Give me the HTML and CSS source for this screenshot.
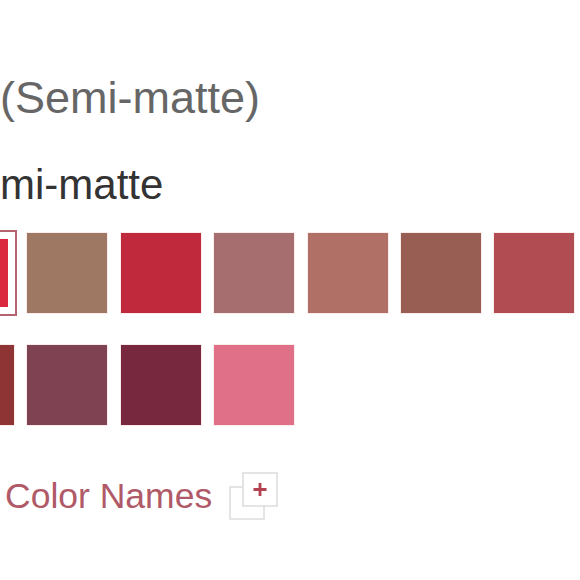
FILE: index.html
```html
<!DOCTYPE html>
<html lang="en">
<head>
<meta charset="utf-8">
<title>Shades</title>
<link rel="stylesheet" href="styles.css">
</head>
<body>
<main class="page">
  <h1 class="title">(Semi-matte)</h1>
  <h2 class="subtitle">mi-matte</h2>
  <div class="swatches">
    <div class="swatch selected c1"></div>
    <div class="swatch c2"></div>
    <div class="swatch c3"></div>
    <div class="swatch c4"></div>
    <div class="swatch c5"></div>
    <div class="swatch c6"></div>
    <div class="swatch c7"></div>
    <div class="swatch c8"></div>
    <div class="swatch c9"></div>
    <div class="swatch c10"></div>
    <div class="swatch c11"></div>
  </div>
  <div class="names">
    <span class="names-link">Color Names</span>
    <svg class="names-icon" width="50" height="48" viewBox="0 0 50 48" aria-hidden="true">
      <rect x="1" y="15" width="34" height="32" fill="#fff" stroke="#dcdcdc" stroke-width="1.5"/>
      <rect x="14" y="1" width="34" height="33" fill="#fff" stroke="#dcdcdc" stroke-width="1.5"/>
      <path d="M31 11v13M24.5 17.5h13" stroke="#b3414f" stroke-width="2.8" fill="none"/>
    </svg>
  </div>
</main>
</body>
</html>
```
FILE: styles.css
```css
html, body {
  margin: 0;
  padding: 0;
  background: #fff;
}
body {
  width: 580px;
  height: 580px;
  overflow: hidden;
  font-family: "Liberation Sans", Arial, sans-serif;
}
.page {
  padding-top: 73px;
}
.title {
  margin: 0;
  font-size: 45px;
  line-height: 50px;
  font-weight: normal;
  color: #666;
}
.subtitle {
  margin: 37px 0 0 0;
  font-size: 42px;
  line-height: 50px;
  font-weight: normal;
  color: #333;
}
.swatches {
  margin: 23px 0 0 -66px;
  display: grid;
  grid-template-columns: repeat(7, 80px);
  column-gap: 13.4px;
  row-gap: 32px;
}
.swatch {
  width: 80px;
  height: 80px;
  box-shadow: 0 0 0 0.5px rgba(240, 180, 180, 0.5);
}
.swatch.selected {
  box-shadow: inset 0 0 0 6px #fff;
  outline: 2px solid #b4636f;
  outline-offset: 1px;
}
.c1 { background: #dc283e; }
.c2 { background: #9e7862; }
.c3 { background: #c0293c; }
.c4 { background: #a66e6e; }
.c5 { background: #b07066; }
.c6 { background: #985e54; }
.c7 { background: #b04c52; }
.c8 { background: #8e3434; }
.c9 { background: #7e4252; }
.c10 { background: #78283e; }
.c11 { background: #e07088; }
.names {
  margin: 47px 0 0 5px;
  display: flex;
  align-items: center;
  gap: 17px;
}
.names-link {
  font-size: 35.5px;
  line-height: 40px;
  color: #b05a68;
}
.names-icon {
  display: block;
}
```
